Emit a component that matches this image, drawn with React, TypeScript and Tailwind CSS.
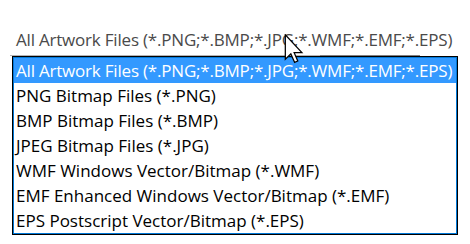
import React from "react";

const items = [
  "All Artwork Files (*.PNG;*.BMP;*.JPG;*.WMF;*.EMF;*.EPS)",
  "PNG Bitmap Files (*.PNG)",
  "BMP Bitmap Files (*.BMP)",
  "JPEG Bitmap Files (*.JPG)",
  "WMF Windows Vector/Bitmap (*.WMF)",
  "EMF Enhanced Windows Vector/Bitmap (*.EMF)",
  "EPS Postscript Vector/Bitmap (*.EPS)",
];

const Cursor = () => (
  <svg
    className="absolute left-[284px] top-[34px]"
    width="20"
    height="30"
    viewBox="0 0 12 19"
  >
    <path
      d="M0.5 0.5 L0.5 16 L4 12.6 L6.4 18 L8.4 17.1 L6.1 11.8 L11 11.8 Z"
      fill="#fff"
      stroke="#000"
      strokeWidth="0.8"
      strokeLinejoin="miter"
    />
  </svg>
);

export default function App() {
  return (
    <div
      className="relative w-[470px] h-[244px] bg-white overflow-hidden"
      style={{ fontFamily: '"Open Sans", "Noto Sans", sans-serif' }}
    >
      <div className="pt-[28px] pl-[16px] h-[55px]">
        <div className="text-[17px] leading-[24px] tracking-[-0.2px] text-[#4a4a4a] whitespace-nowrap">
          {items[0]}
        </div>
      </div>
      <div className="ml-[10px] w-[410px] h-px bg-[#b4b4b4] flex justify-end">
        <div className="w-[100px] h-px bg-[#808080]" />
      </div>
      <div className="ml-[12px] w-[446px] border border-black">
        <div className="border border-[#0078d7] flex flex-col">
          {items.map((t, i) => (
            <div
              key={t}
              className={
                i === 0
                  ? "h-[25px] leading-[25px] pl-[2px] text-[17px] tracking-[-0.2px] whitespace-nowrap bg-[#3399ff] text-white"
                  : "h-[25px] leading-[25px] pl-[2px] text-[17px] whitespace-nowrap text-black"
              }
            >
              {t}
            </div>
          ))}
        </div>
      </div>
      <Cursor />
    </div>
  );
}
